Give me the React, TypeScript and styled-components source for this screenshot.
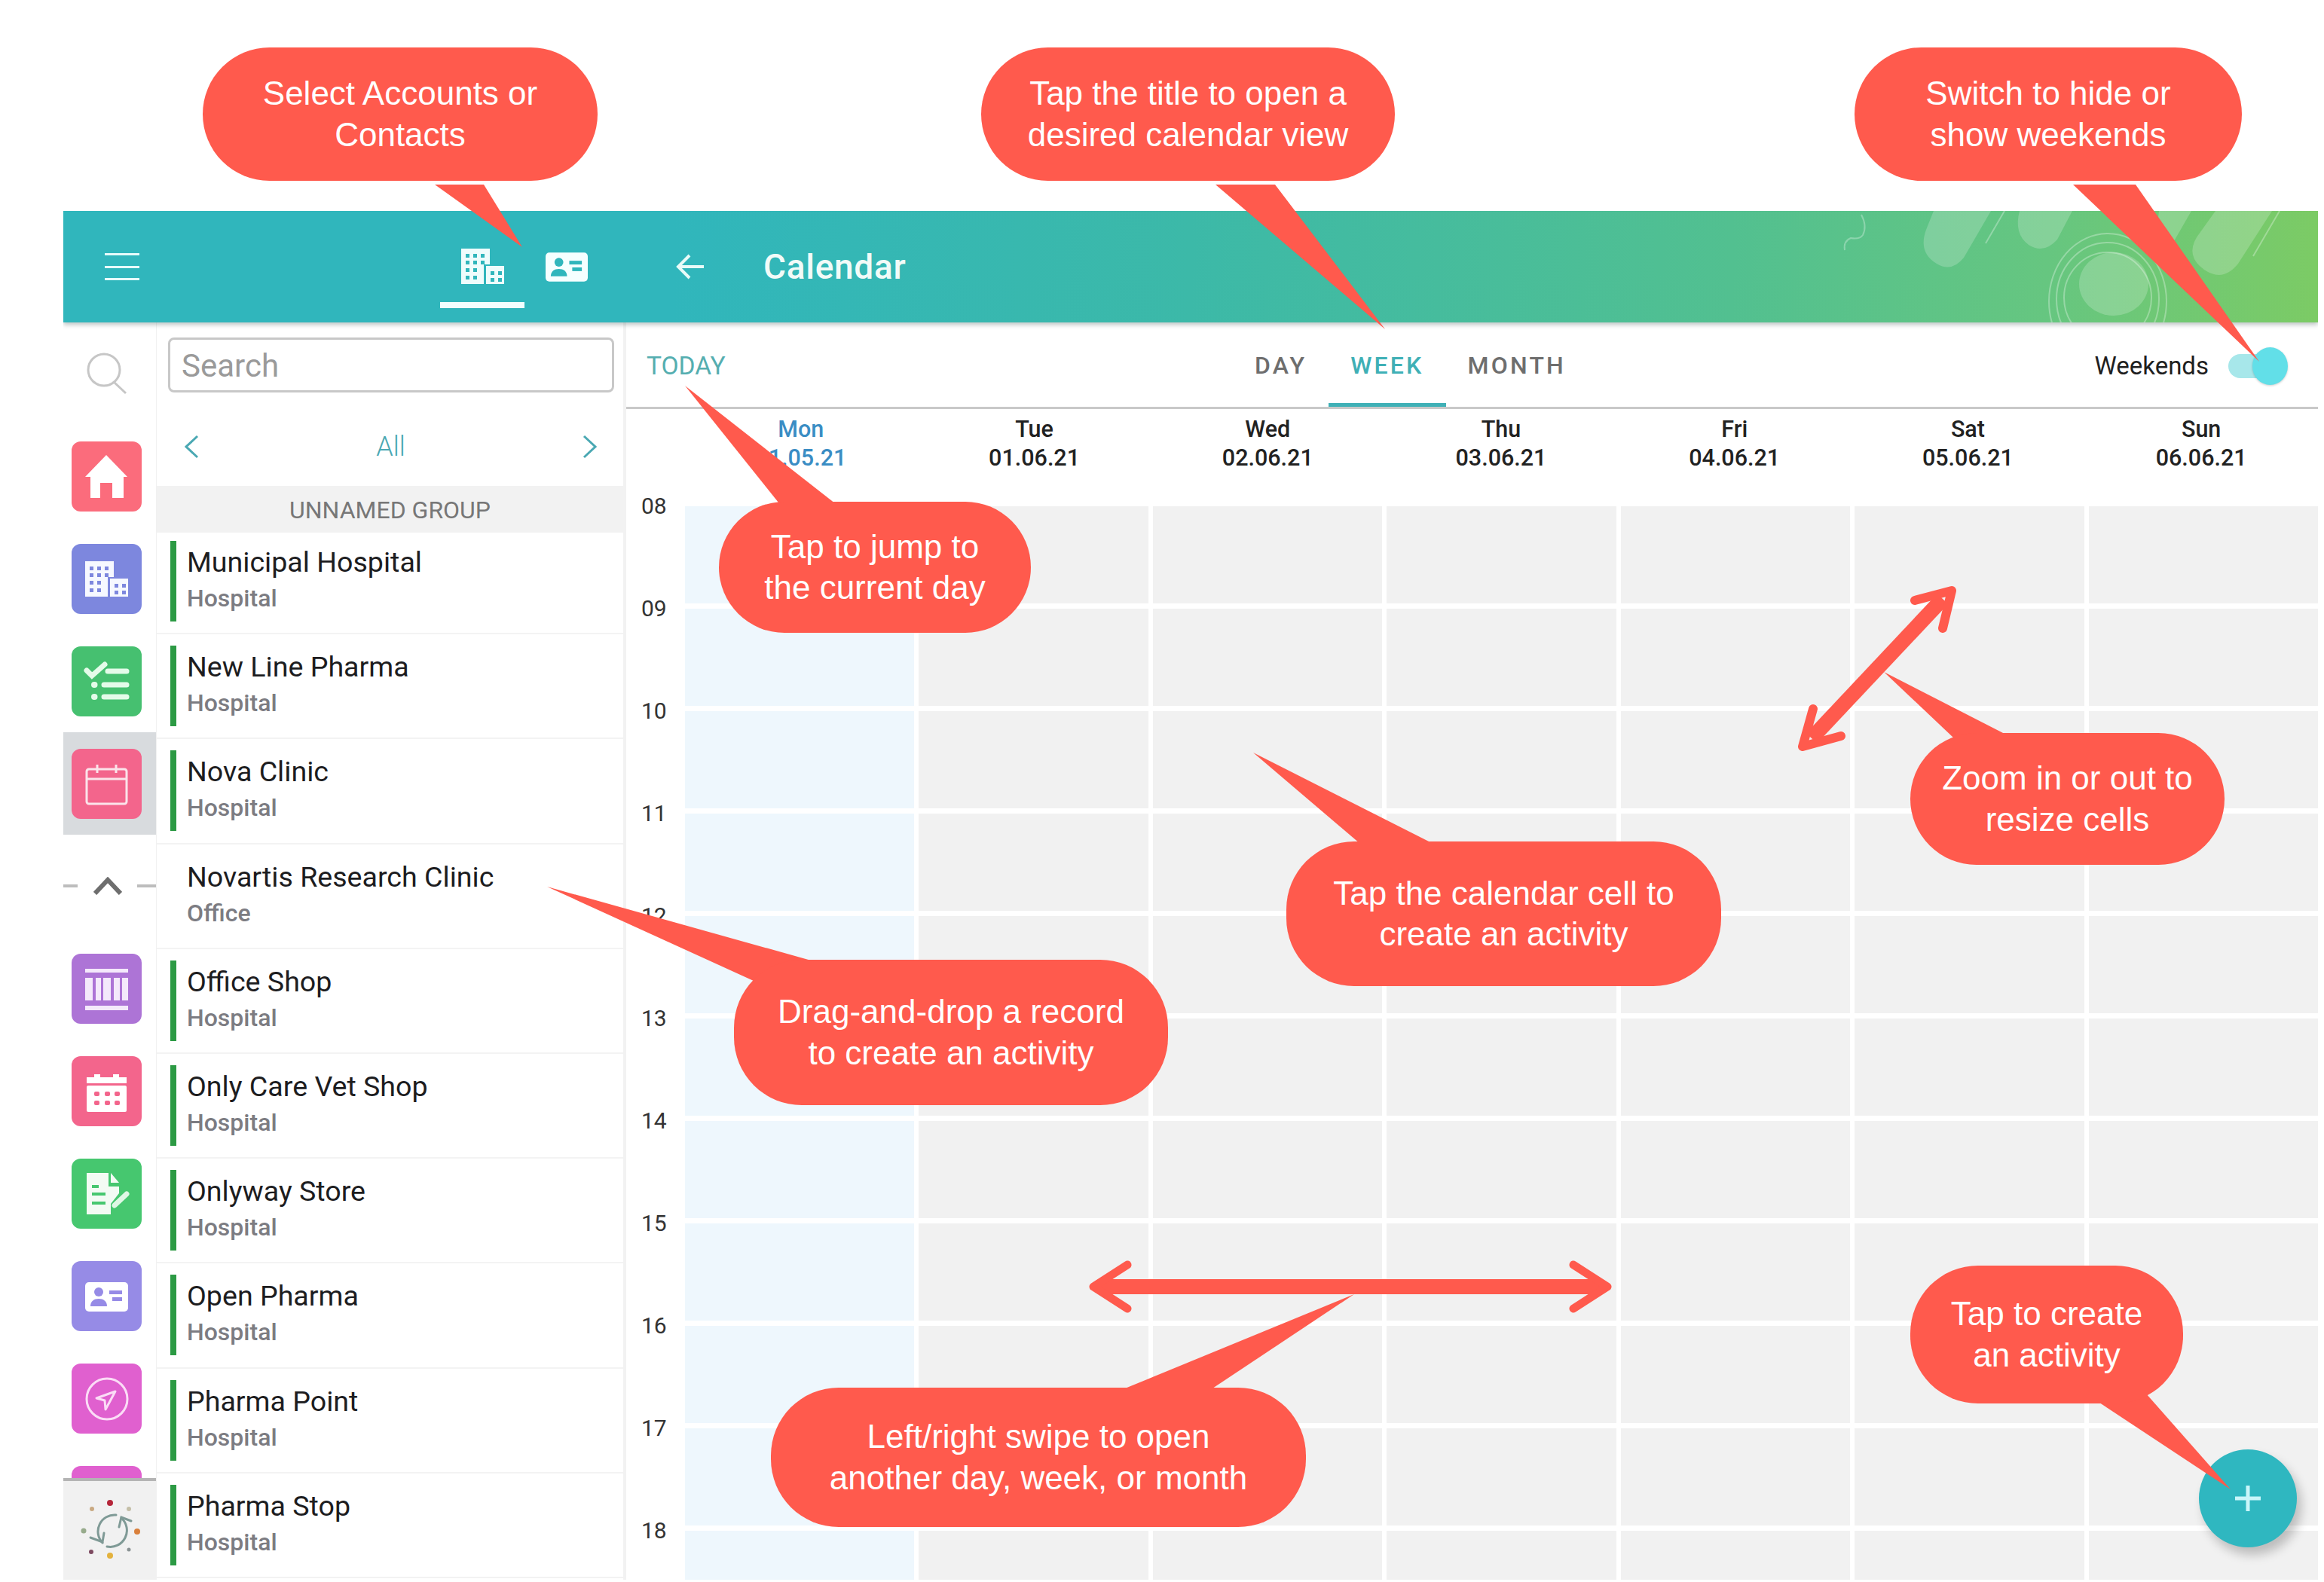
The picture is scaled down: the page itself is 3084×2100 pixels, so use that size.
import React from "react";
import styled, { createGlobalStyle } from "styled-components";

const RED = "#ff5a4d";
const TEAL = "#30b6bc";

const GlobalStyle = createGlobalStyle`
  html, body {
    margin: 0;
    padding: 0;
    background: #fff;
    font-family: Roboto, "Liberation Sans", sans-serif;
  }
  * {
    box-sizing: border-box;
  }
`;

const Stage = styled.div`
  position: relative;
  width: 3084px;
  height: 2100px;
  padding: 280px 8px 3px 84px;
  overflow: hidden;
`;

const Frame = styled.div`
  display: flex;
  flex-direction: column;
  height: 100%;
  overflow: hidden;
  background: #fff;
`;

const Header = styled.header`
  position: relative;
  flex: 0 0 148px;
  display: flex;
  align-items: flex-start;
  background: linear-gradient(90deg, ${TEAL} 0%, ${TEAL} 27%, #3cb9a8 50%, #52c090 74%, #66c680 88%, #7ccb65 100%);
  box-shadow: 0 3px 6px rgba(60, 80, 80, 0.35);
  z-index: 2;
`;

const HeaderDecor = styled.svg`
  position: absolute;
  inset: 0;
  width: 100%;
  height: 100%;
`;

const HeaderLeft = styled.div`
  position: relative;
  width: 743px;
  height: 100%;
  display: flex;
  padding-left: 55px;
`;

const Burger = styled.div`
  width: 46px;
  height: 36px;
  margin-top: 56px;
  display: flex;
  flex-direction: column;
  justify-content: space-between;

  span {
    display: block;
    height: 3px;
    background: #e6fbfb;
  }
`;

const HeadTab = styled.div<{ $active?: boolean }>`
  width: ${(p) => (p.$active ? "112px" : "56px")};
  height: 129px;
  margin-left: ${(p) => (p.$active ? "399px" : "28px")};
  padding-top: ${(p) => (p.$active ? "50px" : "55px")};
  display: flex;
  justify-content: center;
  align-items: flex-start;
  border-bottom: 8px solid ${(p) => (p.$active ? "#f2ffff" : "transparent")};
`;

const HeaderRight = styled.div`
  position: relative;
  flex: 1;
  height: 100%;
  display: flex;
  align-items: center;
  padding-left: 70px;
`;

const Title = styled.h1`
  margin: 0 0 0 78px;
  color: #f2fbf8;
  font-size: 46px;
  font-weight: 500;
  letter-spacing: 0.7px;
`;

const Body = styled.div`
  flex: 1;
  min-height: 0;
  display: flex;
`;

const Rail = styled.nav`
  position: relative;
  flex: 0 0 124px;
  overflow: hidden;
  border-right: 1px solid #f1f1f1;
`;

const RailSearch = styled.div`
  height: 136px;
  padding: 40px 0 0 31px;
`;

const RailItem = styled.div<{ $selected?: boolean }>`
  height: 136px;
  display: flex;
  align-items: center;
  padding-left: 11px;
  background: ${(p) => (p.$selected ? "#d8dbde" : "transparent")};
`;

const Tile = styled.div<{ $color: string }>`
  width: 93px;
  height: 93px;
  border-radius: 12px;
  background: ${(p) => p.$color};

  > svg {
    display: block;
    width: 100%;
    height: 100%;
  }
`;

const Collapse = styled.div`
  height: 136px;
  display: flex;
  align-items: center;
  justify-content: space-between;
`;

const Dash = styled.span<{ $width: number }>`
  width: ${(p) => p.$width}px;
  height: 4px;
  background: #bdbdbd;
`;

const SyncPanel = styled.div`
  position: absolute;
  left: 0;
  right: 0;
  bottom: 0;
  height: 135px;
  display: flex;
  align-items: center;
  justify-content: center;
  background: #f1f1f1;
  border-top: 4px solid #b4b4b4;
`;

const ListPane = styled.aside`
  flex: 0 0 623px;
  display: flex;
  flex-direction: column;
  overflow: hidden;
  border-right: 4px solid #f2f2f2;
`;

const SearchBox = styled.div`
  height: 73px;
  margin: 20px 12px 0 15px;
  padding: 2px 0 0 15px;
  display: flex;
  align-items: center;
  border: 3px solid #c8c8c8;
  border-radius: 8px;
  color: #9a9a9a;
  font-size: 42px;
`;

const ListNav = styled.div`
  height: 124px;
  padding: 20px 34px 0 36px;
  display: flex;
  align-items: center;
  justify-content: space-between;
  color: #4aa8b3;
  font-size: 36px;
  font-weight: 300;
`;

const GroupTitle = styled.div`
  position: relative;
  z-index: 1;
  flex: 0 0 62px;
  margin-bottom: -6px;
  padding-top: 2px;
  display: flex;
  align-items: center;
  justify-content: center;
  background: #f2f2f2;
  color: #777;
  font-size: 32px;
`;

const Row = styled.div`
  flex: 0 0 139.2px;
  display: flex;
  padding: 17px 0 0 18px;
  box-shadow: 0 2px 0 #f3f3f3;
`;

const RowBar = styled.div<{ $on: boolean }>`
  flex: 0 0 8px;
  height: 107px;
  background: ${(p) => (p.$on ? "#2c9a44" : "transparent")};
`;

const RowText = styled.div`
  margin-left: 14px;
  display: flex;
  flex-direction: column;
`;

const RowName = styled.div`
  margin-top: 3px;
  height: 49px;
  line-height: 50px;
  color: #1d1d1f;
  font-size: 37.6px;
`;

const RowSub = styled.div`
  height: 48px;
  line-height: 48px;
  color: #7c7c82;
  font-size: 32px;
  font-weight: 500;
`;

const CalendarPane = styled.main`
  position: relative;
  flex: 1;
  min-width: 0;
  display: flex;
  flex-direction: column;
  overflow: hidden;
`;

const Toolbar = styled.div`
  flex: 0 0 115px;
  display: flex;
  align-items: stretch;
  border-bottom: 3px solid #c9c9c9;
`;

const Today = styled.div`
  flex: 0 0 805px;
  padding: 3px 0 0 27px;
  display: flex;
  align-items: center;
  color: #55aeb0;
  font-size: 33.5px;
`;

const ViewTab = styled.div<{ $active?: boolean }>`
  padding: 6px 29px 0;
  display: flex;
  align-items: center;
  color: ${(p) => (p.$active ? "#3fb0b6" : "#6e6e6e")};
  font-size: 32px;
  font-weight: 500;
  letter-spacing: 3.2px;
  border-bottom: 5px solid ${(p) => (p.$active ? "#3fb0b6" : "transparent")};
`;

const WeekendSwitch = styled.div`
  margin-left: auto;
  padding: 3px 40px 0 0;
  display: flex;
  align-items: center;
  color: #1f1f1f;
  font-size: 33px;
`;

const SwitchTrack = styled.div`
  width: 60px;
  height: 32px;
  margin-left: 26px;
  border-radius: 16px;
  background: #a7e7ea;
`;

const SwitchKnob = styled.div`
  width: 47px;
  height: 50px;
  margin-left: -28px;
  border-radius: 50%;
  background: #62dfe8;
  box-shadow: 0 1px 3px rgba(0, 0, 0, 0.2);
`;

const DayHead = styled.div`
  flex: 0 0 129px;
  padding-left: 77px;
  display: grid;
  grid-template-columns: repeat(7, 1fr);
`;

const DayLabel = styled.div<{ $today?: boolean }>`
  padding-top: 8px;
  text-align: center;
  color: ${(p) => (p.$today ? "#3a8dc4" : "#222")};
  font-size: 30.5px;
  font-weight: 500;
  line-height: 38px;
`;

const Schedule = styled.div`
  flex: 1;
  min-height: 0;
  display: flex;
`;

const Hours = styled.div`
  flex: 0 0 78px;
  margin-top: -18px;
`;

const Hour = styled.div`
  height: 136px;
  line-height: 36px;
  padding-left: 20px;
  color: #333;
  font-size: 30px;
`;

const Cells = styled.div`
  flex: 1;
  display: grid;
  grid-template-columns: repeat(7, 1fr);
  grid-auto-rows: 129px;
  gap: 7px 6px;
`;

const Cell = styled.div<{ $today: boolean }>`
  background: ${(p) => (p.$today ? "#eef7fd" : "#f1f1f1")};
`;

const Fab = styled.div`
  position: absolute;
  right: 28px;
  bottom: 43px;
  width: 130px;
  height: 130px;
  display: flex;
  align-items: center;
  justify-content: center;
  border-radius: 50%;
  background: #2fb7c0;
  box-shadow: 6px 10px 14px rgba(0, 0, 0, 0.22);
`;

const Overlay = styled.svg`
  position: absolute;
  left: 0;
  top: 0;
  width: 3084px;
  height: 2100px;
  z-index: 3;
`;

const Callout = styled.div<{ $x: number; $y: number; $w: number; $h: number }>`
  position: absolute;
  z-index: 4;
  left: ${(p) => p.$x}px;
  top: ${(p) => p.$y}px;
  width: ${(p) => p.$w}px;
  height: ${(p) => p.$h}px;
  display: flex;
  align-items: center;
  justify-content: center;
  text-align: center;
  border-radius: 90px;
  background: ${RED};
  color: #fff;
  font-family: "Liberation Sans", Arial, sans-serif;
  font-size: 44px;
  line-height: 54.5px;
`;

const BuildingIcon = ({ fg, hole }: { fg: string; hole: string }) => (
  <svg width="57" height="47" viewBox="0 0 57 47">
    <rect x="0" y="0" width="38" height="47" fill={fg} />
    <rect x="30" y="21" width="27" height="26" fill={hole} />
    <rect x="33" y="23" width="24" height="24" fill={fg} />
    {[7, 16, 26, 36].map((y) =>
      [6, 16, 26].map((x) => (x === 26 && y > 16 ? null : <rect key={`${x}-${y}`} x={x} y={y} width="5" height="5" fill={hole} />))
    )}
    {[30, 39].map((y) => [39, 49].map((x) => <rect key={`s${x}-${y}`} x={x} y={y} width="5" height="5" fill={hole} />))}
  </svg>
);

const CardIcon = ({ fg, hole }: { fg: string; hole: string }) => (
  <svg width="57" height="39" viewBox="0 0 57 39">
    <rect x="0" y="0" width="57" height="39" rx="5" fill={fg} />
    <circle cx="18" cy="13" r="6" fill={hole} />
    <path d="M7 32c0-7 5-10 11-10s11 3 11 10z" fill={hole} />
    <rect x="32" y="11" width="17" height="5" fill={hole} />
    <rect x="36" y="20" width="13" height="5" fill={hole} />
  </svg>
);

const HomeGlyph = () => (
  <svg viewBox="0 0 93 93">
    <path d="M46 18 74 47H69V75H54V55H38V75H25V47H18Z" fill="#fff" />
  </svg>
);

const BuildingGlyph = ({ hole }: { hole: string }) => (
  <svg viewBox="0 0 93 93">
    <g transform="translate(18 23)">
      <BuildingIcon fg="#f6f8ff" hole={hole} />
    </g>
  </svg>
);

const ChecksGlyph = () => (
  <svg viewBox="0 0 93 93" fill="none" stroke="#e4fbe9" strokeWidth="7" strokeLinecap="round">
    <path d="M20 32 27 39 44 24" />
    <path d="M48 33H73M43 51H73M43 67H73" />
    <path d="M30 51h.5M30 67h.5" strokeWidth="8" />
  </svg>
);

const CalendarGlyph = () => (
  <svg viewBox="0 0 93 93" fill="none" stroke="#fbe3ea" strokeWidth="3">
    <rect x="20" y="27" width="53" height="46" rx="3" />
    <path d="M20 40H73M34 21V32M59 21V32" />
  </svg>
);

const BarcodeGlyph = () => (
  <svg viewBox="0 0 93 93" fill="#f4e9fb">
    <rect x="18" y="20" width="57" height="5" />
    <rect x="18" y="69" width="57" height="6" />
    <rect x="18" y="32" width="10" height="30" />
    <rect x="32" y="32" width="7" height="30" />
    <rect x="42" y="32" width="10" height="30" />
    <rect x="56" y="32" width="8" height="30" />
    <rect x="67" y="32" width="8" height="30" />
  </svg>
);

const CalendarFilledGlyph = () => (
  <svg viewBox="0 0 93 93">
    <path d="M20 36V28H30V24H38V28H55V24H63V28H73V36Z" fill="#fff" />
    <rect x="20" y="39" width="53" height="35" rx="2" fill="#fff" />
    {[50, 62].map((y) =>
      [33, 47, 60].map((x) => <rect key={`${x}-${y}`} x={x - 3} y={y - 3} width="7" height="6" rx="2" fill="#f3658c" />)
    )}
  </svg>
);

const DocGlyph = () => (
  <svg viewBox="0 0 93 93">
    <path d="M20 19H49V37H63V46L52 60V74H20Z" fill="#f3fbf4" />
    <path d="M52 19 63 32H52Z" fill="#f3fbf4" />
    <path d="M27 37H36M27 47H45M27 59H45" stroke="#46c76f" strokeWidth="4" />
    <path d="M57 62 73 47" stroke="#dff7e5" strokeWidth="7" strokeLinecap="round" />
  </svg>
);

const SendGlyph = () => (
  <svg viewBox="0 0 93 93" fill="none" stroke="#fbdcf6" strokeWidth="3">
    <circle cx="47" cy="47" r="27" />
    <path d="M58 37 33 46 44 49 45 61Z" strokeLinejoin="round" />
  </svg>
);

const SearchGlyph = () => (
  <svg width="54" height="56" viewBox="0 0 54 56" fill="none" stroke="#c6c6c6" strokeWidth="3">
    <ellipse cx="23" cy="23" rx="21" ry="21" />
    <path d="M37 40 52 54" />
  </svg>
);

const SyncGlyph = () => {
  const dots: [number, number, string, number][] = [
    [0, -37, "#b5263a", 4],
    [-24, -29, "#c9a982", 3],
    [25, -29, "#c4bfa8", 3],
    [-35, 0, "#97ab8c", 3.5],
    [36, 1, "#d9803c", 4],
    [-25, 28, "#7d4a60", 3],
    [25, 25, "#8b9394", 2.5],
    [0, 33, "#e3b23e", 4],
  ];
  return (
    <svg width="90" height="90" viewBox="-45 -45 90 90">
      {dots.map(([x, y, c, r]) => (
        <circle key={`${x}${y}`} cx={x} cy={y} r={r} fill={c} />
      ))}
      <g fill="none" stroke="#7f9a96" strokeWidth="3" strokeLinecap="round">
        <path d="M15-17A22 22 0 0 1-4 21" />
        <path d="M-10 16A22 22 0 0 1 8-21" />
        <path d="M28-13 15-18 12-5" />
        <path d="M-26 9-10 15-8 3" />
      </g>
    </svg>
  );
};

const days = [
  ["Mon", "31.05.21"],
  ["Tue", "01.06.21"],
  ["Wed", "02.06.21"],
  ["Thu", "03.06.21"],
  ["Fri", "04.06.21"],
  ["Sat", "05.06.21"],
  ["Sun", "06.06.21"],
];

const hours = ["08", "09", "10", "11", "12", "13", "14", "15", "16", "17", "18"];

const records = [
  { name: "Municipal Hospital", kind: "Hospital", bar: true },
  { name: "New Line Pharma", kind: "Hospital", bar: true },
  { name: "Nova Clinic", kind: "Hospital", bar: true },
  { name: "Novartis Research Clinic", kind: "Office", bar: false },
  { name: "Office Shop", kind: "Hospital", bar: true },
  { name: "Only Care Vet Shop", kind: "Hospital", bar: true },
  { name: "Onlyway Store", kind: "Hospital", bar: true },
  { name: "Open Pharma", kind: "Hospital", bar: true },
  { name: "Pharma Point", kind: "Hospital", bar: true },
  { name: "Pharma Stop", kind: "Hospital", bar: true },
];

const callouts = [
  { x: 269, y: 63, w: 524, h: 177, lines: ["Select Accounts or", "Contacts"] },
  { x: 1302, y: 63, w: 549, h: 177, lines: ["Tap the title to open a", "desired calendar view"] },
  { x: 2461, y: 63, w: 514, h: 177, lines: ["Switch to hide or", "show weekends"] },
  { x: 954, y: 666, w: 414, h: 174, lines: ["Tap to jump to", "the current day"] },
  { x: 2535, y: 973, w: 417, h: 175, lines: ["Zoom in or out to", "resize cells"] },
  { x: 1707, y: 1117, w: 577, h: 192, lines: ["Tap the calendar cell to", "create an activity"] },
  { x: 974, y: 1274, w: 576, h: 193, lines: ["Drag-and-drop a record", "to create an activity"] },
  { x: 1023, y: 1842, w: 710, h: 185, lines: ["Left/right swipe to open", "another day, week, or month"] },
  { x: 2535, y: 1680, w: 362, h: 183, lines: ["Tap to create", "an activity"] },
];

// tips are the last point of each tail, the rest sits under the bubble
const tails = [
  "577,245 642,245 693,328",
  "1613,245 1692,245 1838,437",
  "2751,245 2834,245 2998,480",
  "1037,672 1113,672 909,512",
  "2592,979 2640,1010 2662,975 2500,892",
  "1805,1120 1902,1120 1663,999",
  "1000,1302 1120,1320 1080,1276 726,1177",
  "1488,1845 1606,1845 1797,1718",
  "2780,1858 2848,1850 2960,1977",
];

const App = () => {
  return (
    <Stage>
      <GlobalStyle />
      <Frame>
        <Header>
          <HeaderDecor viewBox="84 280 2992 148">
            <g fill="#fff" opacity="0.2">
              <path d="M2566 280H2642L2606 342Q2590 362 2570 350 2545 335 2556 305Z" />
              <path d="M2680 280H2750L2730 318Q2712 338 2692 325 2672 310 2680 280Z" />
              <path d="M2865 280H2908L2885 320 2860 325Z" />
              <path d="M2940 280H3015L2970 350Q2950 375 2925 358 2900 340 2915 315Z" />
              <ellipse cx="2805" cy="377" rx="46" ry="42" />
            </g>
            <g fill="none" stroke="#fff" opacity="0.3" strokeWidth="2">
              <ellipse cx="2797" cy="395" rx="58" ry="60" />
              <ellipse cx="2797" cy="397" rx="68" ry="75" />
              <ellipse cx="2797" cy="400" rx="78" ry="90" />
              <path d="M2660 280 2635 323M3025 280 2990 340" />
              <path d="M2470 285Q2478 300 2472 312 2468 318 2456 316 2446 320 2448 332" />
            </g>
          </HeaderDecor>
          <HeaderLeft>
            <Burger>
              <span />
              <span />
              <span />
            </Burger>
            <HeadTab $active>
              <BuildingIcon fg="#eefcfc" hole={TEAL} />
            </HeadTab>
            <HeadTab>
              <CardIcon fg="#f5ffff" hole={TEAL} />
            </HeadTab>
          </HeaderLeft>
          <HeaderRight>
            <svg width="38" height="36" viewBox="0 0 38 36" fill="none" stroke="#e8fbf8" strokeWidth="4">
              <path d="M37 18H3M18 3 3 18 18 33" />
            </svg>
            <Title>Calendar</Title>
          </HeaderRight>
        </Header>
        <Body>
          <Rail>
            <RailSearch>
              <SearchGlyph />
            </RailSearch>
            <RailItem>
              <Tile $color="#fb6c7c">
                <HomeGlyph />
              </Tile>
            </RailItem>
            <RailItem>
              <Tile $color="#7d87de">
                <BuildingGlyph hole="#7d87de" />
              </Tile>
            </RailItem>
            <RailItem>
              <Tile $color="#46c070">
                <ChecksGlyph />
              </Tile>
            </RailItem>
            <RailItem $selected>
              <Tile $color="#f3658c">
                <CalendarGlyph />
              </Tile>
            </RailItem>
            <Collapse>
              <Dash $width={19} />
              <svg width="38" height="24" viewBox="0 0 38 24" fill="none" stroke="#6e6e6e" strokeWidth="6">
                <path d="M2 22 19 4 36 22" />
              </svg>
              <Dash $width={25} />
            </Collapse>
            <RailItem>
              <Tile $color="#ad74d6">
                <BarcodeGlyph />
              </Tile>
            </RailItem>
            <RailItem>
              <Tile $color="#f3658c">
                <CalendarFilledGlyph />
              </Tile>
            </RailItem>
            <RailItem>
              <Tile $color="#46c76f">
                <DocGlyph />
              </Tile>
            </RailItem>
            <RailItem>
              <Tile $color="#968be6">
                <svg viewBox="0 0 93 93">
                  <g transform="translate(18 28)">
                    <CardIcon fg="#fff" hole="#968be6" />
                  </g>
                </svg>
              </Tile>
            </RailItem>
            <RailItem>
              <Tile $color="#e060cf">
                <SendGlyph />
              </Tile>
            </RailItem>
            <RailItem>
              <Tile $color="#e060cf" />
            </RailItem>
            <SyncPanel>
              <SyncGlyph />
            </SyncPanel>
          </Rail>
          <ListPane>
            <SearchBox>Search</SearchBox>
            <ListNav>
              <svg width="20" height="32" viewBox="0 0 20 32" fill="none" stroke="#4aa8b3" strokeWidth="3">
                <path d="M18 2 3 16 18 30" />
              </svg>
              All
              <svg width="20" height="32" viewBox="0 0 20 32" fill="none" stroke="#4aa8b3" strokeWidth="3">
                <path d="M2 2 17 16 2 30" />
              </svg>
            </ListNav>
            <GroupTitle>UNNAMED GROUP</GroupTitle>
            {records.map((r) => (
              <Row key={r.name}>
                <RowBar $on={r.bar} />
                <RowText>
                  <RowName>{r.name}</RowName>
                  <RowSub>{r.kind}</RowSub>
                </RowText>
              </Row>
            ))}
          </ListPane>
          <CalendarPane>
            <Toolbar>
              <Today>TODAY</Today>
              <ViewTab>DAY</ViewTab>
              <ViewTab $active>WEEK</ViewTab>
              <ViewTab>MONTH</ViewTab>
              <WeekendSwitch>
                Weekends
                <SwitchTrack />
                <SwitchKnob />
              </WeekendSwitch>
            </Toolbar>
            <DayHead>
              {days.map(([d, date], i) => (
                <DayLabel key={d} $today={i === 0}>
                  {d}
                  <br />
                  {date}
                </DayLabel>
              ))}
            </DayHead>
            <Schedule>
              <Hours>
                {hours.map((h) => (
                  <Hour key={h}>{h}</Hour>
                ))}
              </Hours>
              <Cells>
                {hours.map((h) => days.map(([d], i) => <Cell key={h + d} $today={i === 0} />))}
              </Cells>
            </Schedule>
            <Fab>
              <svg width="36" height="36" viewBox="0 0 36 36" stroke="#c9f6fa" strokeWidth="5">
                <path d="M18 1V35M1 18H35" />
              </svg>
            </Fab>
          </CalendarPane>
        </Body>
      </Frame>
      <Overlay viewBox="0 0 3084 2100">
        {tails.map((t) => (
          <polygon key={t} points={t} fill={RED} />
        ))}
        <g fill="none" stroke={RED} strokeLinecap="round" strokeLinejoin="round">
          <path d="M1460 1708H2124" strokeWidth="20" />
          <path d="M1496 1679 1451 1708 1496 1737M2088 1679 2133 1708 2088 1737" strokeWidth="11" />
          <path d="M2404 980 2578 795" strokeWidth="20" strokeLinecap="butt" />
          <path d="M2541 797 2590 784 2578 834M2406 941 2392 991 2443 977" strokeWidth="12" />
        </g>
      </Overlay>
      {callouts.map((c) => (
        <Callout key={c.lines[0]} $x={c.x} $y={c.y} $w={c.w} $h={c.h}>
          <div>
            {c.lines[0]}
            <br />
            {c.lines[1]}
          </div>
        </Callout>
      ))}
    </Stage>
  );
};

export default App;
